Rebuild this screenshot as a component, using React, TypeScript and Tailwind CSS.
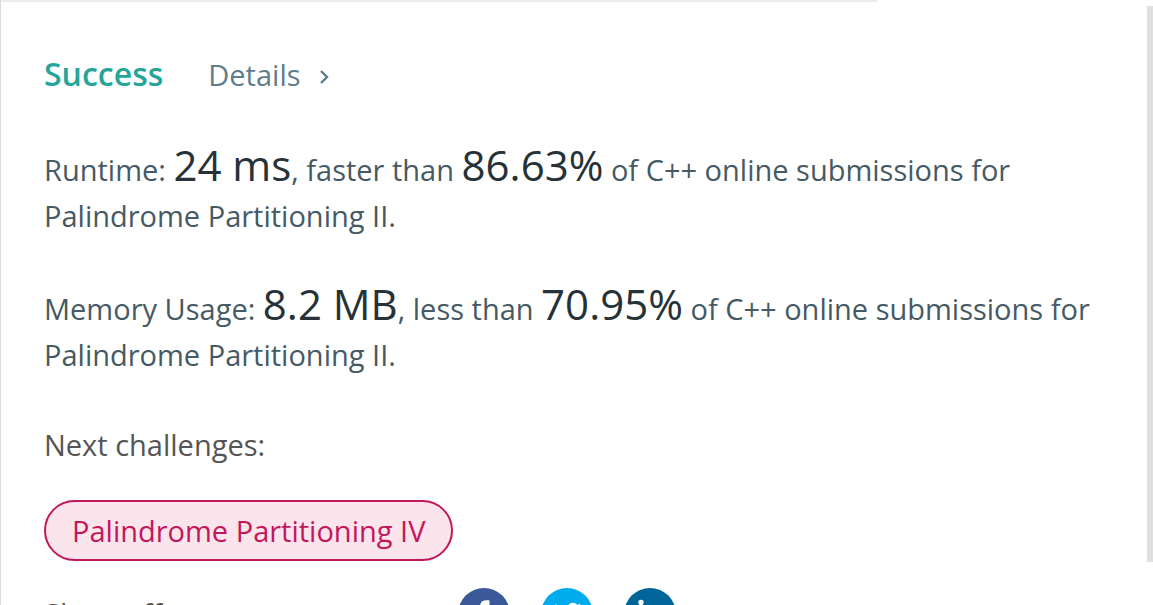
import type { ReactNode } from "react";

function Figure({ children }: { children: ReactNode }) {
  return <span className="text-[42px] leading-none text-[#263238]">{children}</span>;
}

function Share({ label, color, children }: { label: string; color: string; children: ReactNode }) {
  return (
    <a href="#share" aria-label={label} className={`block size-[52px] rounded-full ${color}`}>
      <svg viewBox="0 0 52 52" className="size-full" fill="#fff" aria-hidden="true">
        {children}
      </svg>
    </a>
  );
}

export default function App() {
  return (
    <div className="flex h-screen overflow-hidden border-l border-[#dcdcdc] bg-white font-['Open_Sans','Noto_Sans',sans-serif] text-[29px] leading-[46px] text-[#546e7a]">
      <main className="min-w-0 flex-1">
        <div className="h-[2px] w-[76.4%] bg-[#ececec]" />
        <div className="pt-[49px] pr-[40px] pl-[43px]">
          <header className="flex items-baseline gap-[45px]">
            <h1 className="text-[32px] font-semibold text-[#26a69a]">Success</h1>
            <a href="#details" className="flex items-center gap-[18px] text-[#607d8b]">
              Details
              <svg viewBox="0 0 12 16" className="mt-[4px] h-[16px] w-[12px]" fill="none" stroke="currentColor" strokeWidth="2.4" aria-hidden="true">
                <path d="M2 2 8 8 2 14" />
              </svg>
            </a>
          </header>
          <p className="mt-[46px] text-[#455a64]">
            Runtime: <Figure>24 ms</Figure>, faster than <Figure>86.63%</Figure> of C++ online submissions for Palindrome Partitioning II.
          </p>
          <p className="mt-[44px] text-[#455a64]">
            Memory Usage: <Figure>8.2 MB</Figure>, less than <Figure>70.95%</Figure> of C++ online submissions for Palindrome Partitioning II.
          </p>
          <h2 className="mt-[44px] text-[#555]">Next challenges:</h2>
          <a href="#challenge" className="mt-[32px] inline-block rounded-full border-2 border-[#c2185b] bg-[#fce4ec] px-[26px] pt-[6px] pb-[5px] text-[#c2185b]">
            Palindrome Partitioning IV
          </a>
          <div className="mt-[27px] flex items-center gap-[31px] text-[#555]">
            <span className="w-[383px] whitespace-nowrap">Show off your acceptance:</span>
            <Share label="Facebook" color="bg-[#3b5998]">
              <path d="M22 40V27.500h-4.500V22.500H22V19c0-4.700 2.500-6.700 6.500-6.700 1.500 0 2.500.1 3 .2V17h-2c-2 0-2.500 1-2.500 2.500v3h4.500l-.7 5H27V40z" />
            </Share>
            <Share label="Twitter" color="bg-[#00acee]">
              <path d="M40.500 17.500c-1 .5-2 .8-3.200.9 1.200-.7 2-1.700 2.400-3-1 .6-2.200 1-3.500 1.300A5.800 5.800 0 0 0 26.300 22c-4.600-.2-8.700-2.500-11.500-6-1.500 2.600-.7 6 1.700 7.700-.9 0-1.800-.3-2.500-.7 0 2.700 1.900 5 4.500 5.600-.8.2-1.600.2-2.500.1.700 2.200 2.800 3.800 5.200 3.800A11.500 11.500 0 0 1 12.800 35c8.500 5.300 24.500 1.500 24.500-14 1.200-.8 2.200-1.800 3.200-3.500z" />
            </Share>
            <Share label="LinkedIn" color="bg-[#006699]">
              <circle cx="17" cy="14.500" r="2.700" />
              <path d="M14.600 20h4.800v17h-4.800zM23 20h4.800v2.300c3-4.500 11-3.300 11 4V37h-5v-9c0-5-6-5-6 0v9H23z" />
            </Share>
          </div>
        </div>
      </main>
      <div className="w-[6px] shrink-0 pt-[6px] pb-[43px]">
        <div className="h-full bg-[#e0e0e0]" />
      </div>
    </div>
  );
}
